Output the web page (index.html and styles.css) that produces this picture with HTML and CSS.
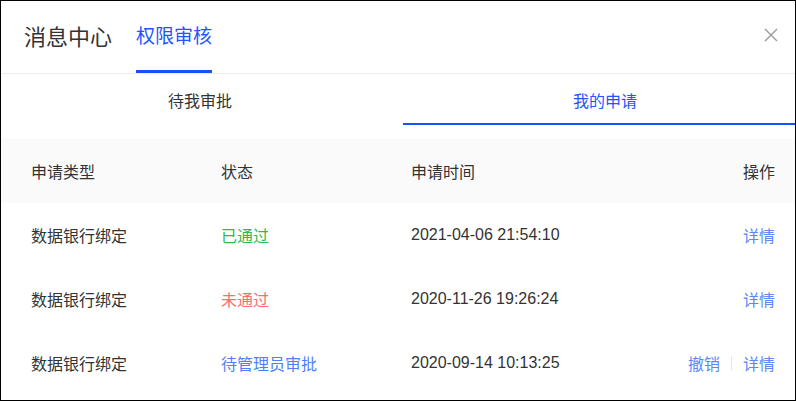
FILE: index.html
```html
<!DOCTYPE html>
<html lang="zh-CN">
<head>
    <meta charset="UTF-8">
    <meta name="viewport" content="width=device-width, initial-scale=1.0">
    <title>权限审核</title>
    <link rel="stylesheet" href="styles.css">
</head>
<body>
    <div class="panel">
        <div class="panel-header">
            <div class="title-tab">消息中心</div>
            <div class="title-tab active">权限审核</div>
            <button class="close-btn" aria-label="关闭">
                <svg width="14" height="14" viewBox="0 0 14 14">
                    <path d="M1 1 L13 13 M13 1 L1 13" stroke="#999" stroke-width="1.4" fill="none"/>
                </svg>
            </button>
        </div>

        <div class="sub-tabs">
            <div class="sub-tab">待我审批</div>
            <div class="sub-tab active">我的申请</div>
        </div>

        <div class="apply-table">
            <div class="row head">
                <div>申请类型</div>
                <div>状态</div>
                <div>申请时间</div>
                <div class="ops">操作</div>
            </div>
            <div class="row">
                <div>数据银行绑定</div>
                <div class="status passed">已通过</div>
                <div>2021-04-06 21:54:10</div>
                <div class="ops"><a href="#">详情</a></div>
            </div>
            <div class="row">
                <div>数据银行绑定</div>
                <div class="status rejected">未通过</div>
                <div>2020-11-26 19:26:24</div>
                <div class="ops"><a href="#">详情</a></div>
            </div>
            <div class="row">
                <div>数据银行绑定</div>
                <div class="status pending">待管理员审批</div>
                <div>2020-09-14 10:13:25</div>
                <div class="ops"><a href="#">撤销</a><span class="sep"></span><a href="#">详情</a></div>
            </div>
        </div>
    </div>
</body>
</html>
```

FILE: styles.css
```css
body {
    margin: 0;
    font-family: "Liberation Sans", "Noto Sans CJK SC", sans-serif;
    color: #333;
    background-color: #fff;
}

.panel {
    width: 796px;
    height: 401px;
    box-sizing: border-box;
    border: 1px solid #000;
    overflow: hidden;
}

.panel-header {
    display: flex;
    align-items: stretch;
    height: 72px;
    padding: 0 17px 0 23px;
    border-bottom: 1px solid #ebebeb;
}

.title-tab {
    display: flex;
    align-items: center;
    box-sizing: border-box;
    padding-bottom: 2px;
    margin-right: 24px;
    font-size: 22px;
    color: #333;
    border-bottom: 3px solid transparent;
}

.title-tab.active {
    font-size: 19px;
    color: #1d55ff;
    border-bottom-color: #1452ff;
}

.close-btn {
    margin-left: auto;
    align-self: center;
    margin-bottom: 4px;
    padding: 0;
    border: none;
    background: none;
    width: 14px;
    height: 14px;
    cursor: pointer;
}

.close-btn svg {
    display: block;
}

.sub-tabs {
    display: flex;
    height: 51px;
    margin-bottom: 14px;
}

.sub-tab {
    display: flex;
    align-items: center;
    justify-content: center;
    box-sizing: border-box;
    width: 398px;
    padding-top: 2px;
    font-size: 16px;
    color: #333;
    border-bottom: 2px solid transparent;
}

.sub-tab.active {
    flex: 1;
    margin-left: 4px;
    padding-left: 12px;
    color: #1d55ff;
    border-bottom-color: #1452ff;
}

.apply-table {
    font-size: 16px;
}

.row {
    display: grid;
    grid-template-columns: 190px 190px 1fr auto;
    align-items: center;
    height: 64px;
    padding: 0 20px 0 30px;
}

.row.head {
    background-color: #fafafa;
}

.ops {
    display: flex;
    align-items: center;
    justify-content: flex-end;
}

.ops a {
    color: #5b88f6;
    text-decoration: none;
}

.sep {
    width: 1px;
    height: 14px;
    margin: 0 11px;
    background-color: #e6e6e6;
}

.status.passed {
    color: #33b84c;
}

.status.rejected {
    color: #fa6e6e;
}

.status.pending {
    color: #4f80f6;
}
```
